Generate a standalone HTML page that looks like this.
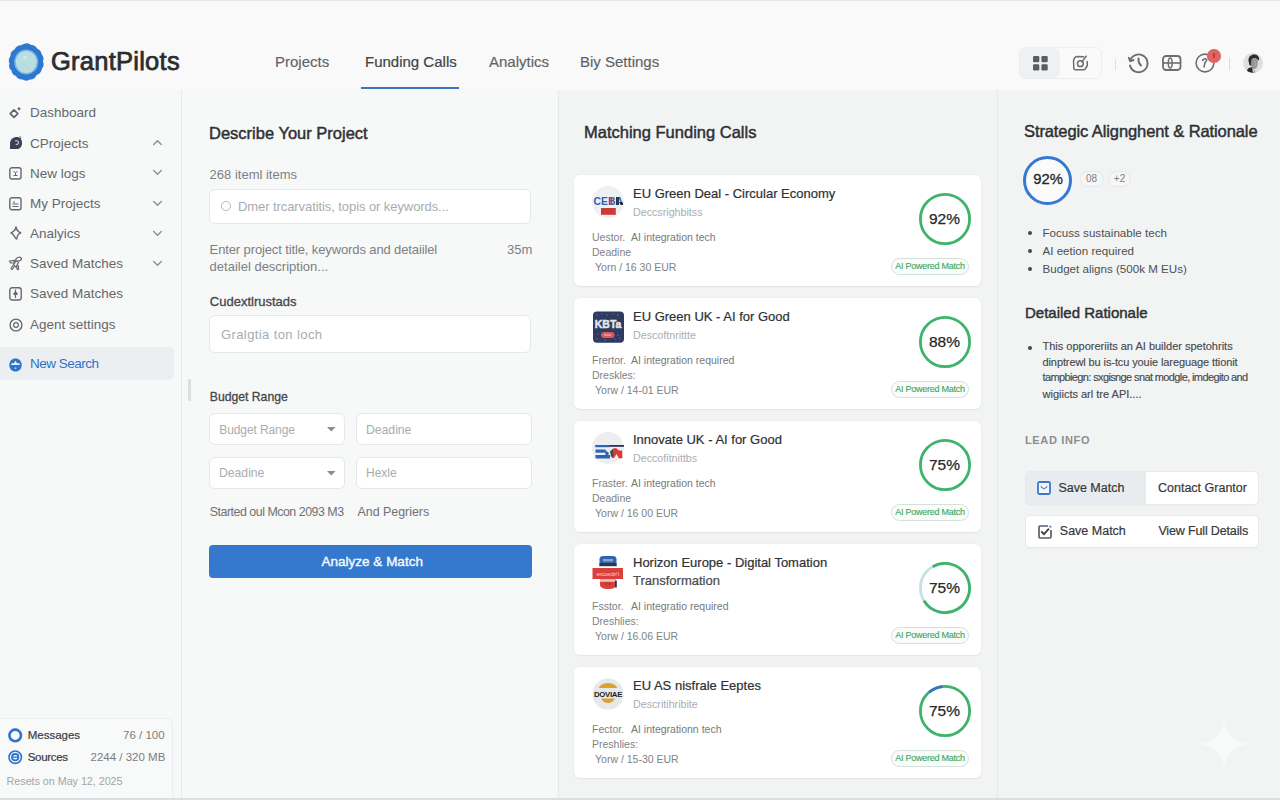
<!DOCTYPE html>
<html><head><meta charset="utf-8">
<style>
*{box-sizing:border-box;margin:0;padding:0}
html,body{width:1280px;height:800px;overflow:hidden}
body{font-family:"Liberation Sans",sans-serif;background:#f7f8f8;position:relative;color:#333}
.a{position:absolute;white-space:nowrap}
svg.a{overflow:visible}
#hdr{position:absolute;left:0;top:0;width:1280px;height:91px;background:#f9f9f9;border-bottom:1px solid #e8eaeb}
#side{position:absolute;left:0;top:90px;width:182px;height:710px;background:#f7f8f8;border-right:1px solid #e6e8e9}
#left{position:absolute;left:182px;top:90px;width:376px;height:710px;background:#f7f8f8}
#mid{position:absolute;left:558px;top:90px;width:440px;height:710px;background:#f2f4f4;border-left:1px solid #e8eaea}
#right{position:absolute;left:997px;top:90px;width:283px;height:710px;background:#f2f4f4;border-left:1px solid #e6e8e8}
#botline{position:absolute;left:0;top:798px;width:1280px;height:2px;background:#dcdfe0;z-index:5}
.nav{font-size:15px;color:#5f6265;top:53px;-webkit-text-stroke:0.15px #5f6265}
.si{font-size:13.5px;color:#65686b;left:30px}
.h2{font-size:16.5px;color:#2e3033;-webkit-text-stroke:0.45px #2e3033}
.lbl{font-size:13px;color:#7d8083}
.inp{position:absolute;background:#fff;border:1px solid #e5e7e9;border-radius:6px}
.ph{font-size:13px;color:#a9acae}
.card{position:absolute;left:574px;width:407px;height:111px;background:#fff;border-radius:6px;box-shadow:0 1px 2px rgba(0,0,0,0.05),0 0 0 1px rgba(0,0,0,0.015)}
.ct{font-size:13px;color:#2e3033;left:59px;top:11px;-webkit-text-stroke:0.2px #2e3033}
.cs{font-size:10.7px;color:#abadaf;left:59px;top:30.7px}
.cm{font-size:10.5px;color:#808285}
.ring{position:absolute;left:344.5px;top:18.3px;width:52px;height:52px}
.pct{position:absolute;left:344.5px;top:35.2px;width:52px;text-align:center;font-size:15.5px;color:#26282a;-webkit-text-stroke:0.25px #26282a}
.badge{position:absolute;left:317px;top:83px;width:78px;height:16.5px;border:1px solid #d3e2d8;border-radius:9px;font-size:9px;color:#3aa85c;-webkit-text-stroke:0.12px #3aa85c;text-align:center;line-height:14.5px;background:#fafcfb;letter-spacing:-0.25px}
.logo{position:absolute;left:18px;top:11px;width:32px;height:32px}
.bl{font-size:11.6px;color:#4c4f52}
.pl{font-size:11px;color:#46494c;-webkit-text-stroke:0.15px #46494c}
.dot{position:absolute;width:4px;height:4px;border-radius:50%;background:#45474a}
</style></head><body>
<div id="hdr"></div>
<div id="side"></div>
<div id="left"></div>
<div id="mid"></div>
<div id="right"></div>
<div id="botline"></div>
<div class="a" style="left:0;top:0;width:1280px;height:1px;background:#e3e6e6"></div>

<!-- Header -->
<svg class="a" style="left:8px;top:42px" width="37" height="40" viewBox="0 0 37 40">
<path d="M16 2C18 0.8 21 1.2 22.5 2.8C25 3 28 4 29 6.5C31.5 7.5 33.5 9.5 33.5 12C35.5 14 36 17 35 19.5C36.2 22 35.8 25 33.8 27C33.5 30 31 32.5 28.5 33C28 35.5 25 37.8 22 37.6C20 39 16.5 39 14.8 37.5C12 37.8 9 36.5 8 34C5.5 33.5 3.5 31 3.5 28.5C1.2 27 0.5 24 1.5 21.5C0.2 19 0.8 16 2.5 14C2.2 11 4 8.5 6.5 7.5C7.5 4.8 10 3.2 13 3.2C14 2.5 15 2.2 16 2Z" fill="#2f78d2"/>
<ellipse cx="18.2" cy="20" rx="12" ry="12.5" fill="#7fb3e3"/>
<ellipse cx="18.2" cy="20" rx="10.5" ry="11" fill="#b8dfe0"/>
<circle cx="17" cy="15.5" r="2" fill="#dfe3e3"/><circle cx="20.5" cy="26" r="1.8" fill="#cfd3d3"/>
</svg>
<div class="a" style="left:51px;top:46.8px;font-size:25.5px;color:#2b2d2f;-webkit-text-stroke:0.75px #2b2d2f;letter-spacing:0.25px">GrantPilots</div>
<div class="a nav" style="left:275px">Projects</div>
<div class="a nav" style="left:365px;color:#424447;-webkit-text-stroke:0.2px #424447">Funding Calls</div>
<div class="a nav" style="left:489px">Analytics</div>
<div class="a nav" style="left:580px">Biy Settings</div>
<div class="a" style="left:361px;top:87.3px;width:98px;height:2.2px;background:#3a76c4"></div>

<div class="a" style="left:1019px;top:47px;width:83px;height:32px;border:1px solid #eceeef;border-radius:7px;background:#fafafa"></div>
<div class="a" style="left:1020px;top:48px;width:40px;height:30px;border-radius:6px;background:#eef0f1"></div>
<svg class="a" style="left:1032.5px;top:56px" width="15" height="15" viewBox="0 0 15 15"><rect x="0" y="0" width="6.3" height="6.3" rx="1.2" fill="#5a5c5f"/><rect x="8.4" y="0" width="6.3" height="6.3" rx="1.2" fill="#5a5c5f"/><rect x="0" y="8.2" width="6.3" height="6.3" rx="1.2" fill="#5a5c5f"/><rect x="8.4" y="8.2" width="6.3" height="6.3" rx="1.2" fill="#5a5c5f"/></svg>
<svg class="a" style="left:1068px;top:50px" width="26" height="26" viewBox="0 0 26 26"><path d="M15.6 6.8L9.1 6.5Q7.5 6.6 6.5 8L5.5 10.7L5.85 18.5Q5.9 19.8 7.2 19.8L15.5 19.8Q16.5 19.8 17.2 19L19.3 15.5L19.2 11.4" fill="none" stroke="#6a6d70" stroke-width="1.5" stroke-linejoin="round" stroke-linecap="round"/><circle cx="12.35" cy="13.65" r="2.9" fill="none" stroke="#6a6d70" stroke-width="1.5"/><path d="M13.9 11.9L18.2 6.2" stroke="#6a6d70" stroke-width="1.5" stroke-linecap="round"/></svg>
<div class="a" style="left:1115px;top:58.5px;width:1px;height:11.5px;background:#dcdee0"></div>
<svg class="a" style="left:1128px;top:53px" width="21" height="20" viewBox="0 0 21 20"><path d="M2.2 7.5A8.9 8.9 0 1 1 2 12.5" fill="none" stroke="#6b6e71" stroke-width="1.9" stroke-linecap="round"/><path d="M0.8 4.8L2.2 8.2L5.6 7" fill="none" stroke="#6b6e71" stroke-width="1.9" stroke-linecap="round" stroke-linejoin="round"/><path d="M10.5 5.5C10.3 8 10.8 10.5 13 12.5" fill="none" stroke="#6b6e71" stroke-width="1.9" stroke-linecap="round"/></svg>
<svg class="a" style="left:1162px;top:55px" width="20" height="16" viewBox="0 0 20 16"><rect x="1" y="1" width="17.5" height="14" rx="3.2" fill="none" stroke="#6b6e71" stroke-width="1.8"/><path d="M1 8H18.5" stroke="#6b6e71" stroke-width="1.6"/><ellipse cx="8.2" cy="8" rx="1.9" ry="5" fill="none" stroke="#6b6e71" stroke-width="1.5"/></svg>
<svg class="a" style="left:1194.5px;top:53px" width="20" height="20" viewBox="0 0 20 20"><circle cx="10" cy="10" r="8.9" fill="none" stroke="#6b6e71" stroke-width="1.6"/><path d="M7.5 7.5C8 5.8 10.5 5.3 11.5 6.5C12.3 7.5 11 8.5 10 9.5L9 14" fill="none" stroke="#6b6e71" stroke-width="1.5" stroke-linecap="round"/></svg>
<div class="a" style="left:1207px;top:49px;width:13.6px;height:13.6px;border-radius:50%;background:#df6464"></div>
<div class="a" style="left:1212.5px;top:53px;width:2.5px;height:5px;border-radius:1px;background:#b83a3a"></div>
<div class="a" style="left:1229px;top:58px;width:1px;height:12px;background:#dadcde"></div>
<svg class="a" style="left:1243px;top:53px" width="20" height="20" viewBox="0 0 20 20"><defs><clipPath id="av"><circle cx="10" cy="10" r="10"/></clipPath></defs><g clip-path="url(#av)"><rect width="20" height="20" fill="#dedede"/><path d="M5.5 8C5 3 9 1 12 1.5C15.5 2 16.5 5 16 7.5L15 7C14 5.5 12 5 10 5.5L8.5 9L8.5 13L6.5 12Z" fill="#2b2b2d"/><path d="M8.5 6C11 5 13.5 5.5 14.8 7.5L14.5 12C14 15 12.5 16 11 16L9 14.5L8.3 10Z" fill="#9a9494"/><path d="M11.5 8L12.5 10.5L12 13.5" stroke="#e79a8a" stroke-width="1" fill="none"/><path d="M3 20L5 15.5L9 14L10.5 16.5L12.5 20Z" fill="#2a2a2e"/><path d="M9 14.5L11 17L12 20H10Z" fill="#cfcfcf"/></g></svg>


<!-- Sidebar -->
<svg class="a" style="left:8px;top:106px" width="15" height="14" viewBox="0 0 15 14"><path d="M6 3.8L9.8 7.6L6 11.4L2.2 7.6Z" fill="none" stroke="#636669" stroke-width="1.7" stroke-linejoin="round"/><path d="M11 1L12.8 2.8L11 4.6L9.2 2.8Z" fill="#636669"/></svg>
<svg class="a" style="left:8.5px;top:135.5px" width="14" height="14" viewBox="0 0 14 14"><path d="M1 13L1 8C1 3.5 4 1 8 1C11 1 13 3.5 13 7C13 10.5 11 13 8 13Z" fill="#3b4056"/><path d="M6 5C7.5 4 9.5 4.8 9.5 6.5C9.5 8 8 9 6.8 8.2" fill="none" stroke="#b9bcc5" stroke-width="1.3"/><path d="M10.5 0.5L12 1.5L11 3" fill="none" stroke="#555a6c" stroke-width="1"/></svg>
<svg class="a" style="left:9px;top:166.5px" width="13" height="13" viewBox="0 0 13 13"><rect x="0.8" y="0.8" width="11.2" height="11.2" rx="2" fill="none" stroke="#66696c" stroke-width="1.4"/><path d="M4.5 4L6.5 6L8.5 4M4.5 8.5H8.5M6.5 6V8.5" fill="none" stroke="#66696c" stroke-width="1"/></svg>
<svg class="a" style="left:9px;top:196.6px" width="13" height="14" viewBox="0 0 13 14"><rect x="0.8" y="0.8" width="11.2" height="12" rx="2" fill="none" stroke="#66696c" stroke-width="1.4"/><path d="M5 4V6.5M3.5 7H9.5M3.5 9.5H9.5" fill="none" stroke="#66696c" stroke-width="1"/></svg>
<svg class="a" style="left:9.5px;top:226.3px" width="12" height="14" viewBox="0 0 12 14"><path d="M6 0.8C6.5 4 7.5 5.5 10.8 6.8C8 7.8 7 9 6.8 13C5 13 5 9 1 6.8C4 5.5 5.5 4 6 0.8Z" fill="none" stroke="#66696c" stroke-width="1.4" stroke-linejoin="round"/></svg>
<svg class="a" style="left:8px;top:255.5px" width="15" height="15" viewBox="0 0 15 15"><ellipse cx="10.6" cy="3.2" rx="2.9" ry="1.8" transform="rotate(-20 10.6 3.2)" fill="none" stroke="#66696c" stroke-width="1.3"/><path d="M8 4.5L5.5 9L8.2 11.2L10.5 6" fill="none" stroke="#66696c" stroke-width="1.3" stroke-linejoin="round"/><path d="M1.5 5L6.8 4.3L5.8 7L2.5 7Z" fill="none" stroke="#66696c" stroke-width="1.2" stroke-linejoin="round"/><path d="M4.8 9.5L3 12.8L4.3 13.5L6.3 10.5" fill="none" stroke="#66696c" stroke-width="1.2" stroke-linejoin="round"/><path d="M8.5 10L9.3 13.6L10.6 13.4L10.2 9" fill="none" stroke="#66696c" stroke-width="1.2" stroke-linejoin="round"/></svg>
<svg class="a" style="left:9px;top:286.6px" width="13" height="14" viewBox="0 0 13 14"><rect x="0.8" y="0.8" width="11.4" height="12.2" rx="2.3" fill="none" stroke="#66696c" stroke-width="1.4"/><path d="M6.5 2.5V11M4 7H9" stroke="#66696c" stroke-width="1.2"/><circle cx="6.5" cy="6.5" r="1.8" fill="#66696c"/></svg>
<svg class="a" style="left:8.5px;top:317.5px" width="14" height="14" viewBox="0 0 14 14"><circle cx="7" cy="7" r="5.9" fill="none" stroke="#66696c" stroke-width="1.4"/><circle cx="7" cy="7" r="2.4" fill="none" stroke="#66696c" stroke-width="1.2"/></svg>
<svg class="a" style="left:153px;top:140px" width="9" height="5" viewBox="0 0 9 5"><path d="M0.7 4.4L4.5 0.8L8.3 4.4" fill="none" stroke="#8c8f92" stroke-width="1.4" stroke-linecap="round" stroke-linejoin="round"/></svg>
<svg class="a" style="left:153px;top:170.3px" width="9" height="5" viewBox="0 0 9 5"><path d="M0.7 0.6L4.5 4.2L8.3 0.6" fill="none" stroke="#8c8f92" stroke-width="1.4" stroke-linecap="round" stroke-linejoin="round"/></svg>
<svg class="a" style="left:153px;top:200.5px" width="9" height="5" viewBox="0 0 9 5"><path d="M0.7 0.6L4.5 4.2L8.3 0.6" fill="none" stroke="#8c8f92" stroke-width="1.4" stroke-linecap="round" stroke-linejoin="round"/></svg>
<svg class="a" style="left:153px;top:230.8px" width="9" height="5" viewBox="0 0 9 5"><path d="M0.7 0.6L4.5 4.2L8.3 0.6" fill="none" stroke="#8c8f92" stroke-width="1.4" stroke-linecap="round" stroke-linejoin="round"/></svg>
<svg class="a" style="left:153px;top:261px" width="9" height="5" viewBox="0 0 9 5"><path d="M0.7 0.6L4.5 4.2L8.3 0.6" fill="none" stroke="#8c8f92" stroke-width="1.4" stroke-linecap="round" stroke-linejoin="round"/></svg>
<div class="a si" style="top:105px">Dashboard</div>
<div class="a si" style="top:135.7px">CProjects</div>
<div class="a si" style="top:165.7px">New logs</div>
<div class="a si" style="top:195.7px">My Projects</div>
<div class="a si" style="top:226.4px">Analyics</div>
<div class="a si" style="top:255.7px">Saved Matches</div>
<div class="a si" style="top:286.2px">Saved Matches</div>
<div class="a si" style="top:317.2px">Agent settings</div>
<div class="a" style="left:0;top:347px;width:174px;height:33px;background:#eceff1;border-radius:0 5px 5px 0"></div>
<svg class="a" style="left:8.5px;top:357.5px" width="13" height="14" viewBox="0 0 13 14"><path d="M6.5 0.5C10 0.5 12.7 3.2 12.7 7C12.7 10.8 10 13.5 6.5 13.5C3 13.5 0.3 10.8 0.3 7C0.3 3.2 3 0.5 6.5 0.5Z" fill="#2f74cc"/><path d="M6.5 2.8L8 5.2H10.5L10.8 7H2.2L2.5 5.2H5Z" fill="#eef2f6"/><circle cx="6.5" cy="10.2" r="0.9" fill="#b9cfee"/></svg>
<div class="a si" style="top:356.4px;color:#2f72c8;letter-spacing:-0.5px">New Search</div>
<div class="a" style="left:188px;top:379px;width:3px;height:22px;background:#dcdedf;border-radius:1px"></div>

<div class="a" style="left:0;top:718px;width:173px;height:84px;border:1px solid #eceeef;border-left:none;border-radius:0 6px 0 0;background:#f8f9f9"></div>
<svg class="a" style="left:7.5px;top:728px" width="15" height="15" viewBox="0 0 15 15"><circle cx="7.2" cy="7.4" r="5.8" fill="none" stroke="#2f74cc" stroke-width="2.6"/><path d="M4.5 1.8H10" stroke="#2f74cc" stroke-width="2"/></svg>
<svg class="a" style="left:7.5px;top:749.5px" width="15" height="15" viewBox="0 0 15 15"><circle cx="7.2" cy="7.2" r="6.2" fill="none" stroke="#2f74cc" stroke-width="1.6"/><circle cx="7.2" cy="7.2" r="3.2" fill="none" stroke="#2f74cc" stroke-width="1.8"/><path d="M4.5 7.2H10" stroke="#2f74cc" stroke-width="1.3"/></svg>
<div class="a" style="left:27.7px;top:729px;font-size:11.5px;color:#3a3c3f;-webkit-text-stroke:0.2px #3a3c3f">Messages</div>
<div class="a" style="left:123px;top:729px;font-size:11.5px;color:#7a7d80">76 / 100</div>
<div class="a" style="left:27.7px;top:750.5px;font-size:11.5px;color:#3a3c3f;letter-spacing:-0.3px;-webkit-text-stroke:0.2px #3a3c3f">Sources</div>
<div class="a" style="left:90.5px;top:750.5px;font-size:11.5px;color:#7a7d80">2244 / 320 MB</div>
<div class="a" style="left:6.6px;top:775px;font-size:10.8px;color:#a3a6a8;letter-spacing:-0.05px">Resets on May 12, 2025</div>

<!-- Left panel -->
<div class="a h2" style="left:209px;top:123.7px">Describe Your Project</div>
<div class="a lbl" style="left:209.6px;top:167.2px">268 iteml items</div>
<div class="inp" style="left:209px;top:189px;width:322px;height:35px"></div>
<div class="a" style="left:221px;top:201px;width:9.5px;height:9.5px;border:1.5px solid #b3b5b7;border-radius:50%"></div>
<div class="a ph" style="left:238px;top:199.1px;letter-spacing:-0.08px">Dmer trcarvatitis, topis or keywords...</div>
<div class="a lbl" style="left:209.6px;top:242px;letter-spacing:-0.12px">Enter project title, keywords and detaiilel</div>
<div class="a lbl" style="left:209.6px;top:258.9px">detailel description...</div>
<div class="a lbl" style="left:507px;top:242px">35m</div>
<div class="a lbl" style="left:209.8px;top:293.8px;color:#45474a;-webkit-text-stroke:0.3px #45474a">Cudextlrustads</div>
<div class="inp" style="left:209px;top:315px;width:322px;height:38px"></div>
<div class="a ph" style="left:221px;top:327.3px;letter-spacing:0.4px">Gralgtia ton loch</div>
<div class="a lbl" style="left:209.8px;top:389.8px;color:#45474a;font-size:12.2px;-webkit-text-stroke:0.3px #45474a">Budget Range</div>
<div class="inp" style="left:209px;top:413px;width:136px;height:32px"></div>
<div class="a ph" style="left:219.3px;top:423px;font-size:12px;letter-spacing:-0.1px">Budget Range</div>
<svg class="a" style="left:326.5px;top:427px" width="8.5" height="4.5"><path d="M0 0H8.5L4.25 4.5Z" fill="#8a8c8f"/></svg>
<div class="inp" style="left:355.5px;top:413px;width:176px;height:32px"></div>
<div class="a ph" style="left:366px;top:423px;font-size:12.2px">Deadine</div>
<div class="inp" style="left:209px;top:457px;width:136px;height:32px"></div>
<div class="a ph" style="left:219px;top:466px;font-size:12.2px">Deadine</div>
<svg class="a" style="left:326.5px;top:471px" width="8.5" height="4.5"><path d="M0 0H8.5L4.25 4.5Z" fill="#8a8c8f"/></svg>
<div class="inp" style="left:355.5px;top:457px;width:176px;height:32px"></div>
<div class="a ph" style="left:366px;top:466px;font-size:12px">Hexle</div>
<div class="a lbl" style="left:209.8px;top:505.2px;color:#6f7275;font-size:12.4px;letter-spacing:-0.48px">Started oul Mcon 2093 M3</div>
<div class="a lbl" style="left:357.5px;top:505.2px;color:#6f7275;font-size:12.4px">And Pegriers</div>
<div class="a" style="left:208.5px;top:545px;width:323.5px;height:33px;background:#3579cf;border-radius:4px;color:#f4f8fd;font-size:13.5px;text-align:center;line-height:33px;padding-left:4px;-webkit-text-stroke:0.4px #f4f8fd">Analyze &amp; Match</div>

<!-- Middle -->
<div class="a h2" style="left:584px;top:122.7px">Matching Funding Calls</div>
<div class="card" style="top:175px">
  <div class="logo" id="c1L"><svg width="32" height="32" viewBox="0 0 32 32"><circle cx="16" cy="16" r="16" fill="#eff0f1"/><text x="1.5" y="19" textLength="29.5" lengthAdjust="spacingAndGlyphs" font-family="Liberation Sans" font-weight="bold" font-size="11.5" fill="#2f63b5">CEBA</text><rect x="18.5" y="11" width="1.8" height="8" fill="#d23a36"/><rect x="24" y="11" width="3" height="8" fill="#2d3650"/><circle cx="29.5" cy="17.5" r="1.5" fill="#1d1f25"/><rect x="9" y="22" width="14.8" height="6.8" fill="#cb3a35"/></svg></div>
  <div class="a ct">EU Green Deal - Circular Economy</div>
  <div class="a cs">Deccsrighbitss</div>
  <div class="a cm" style="left:18px;top:55.5px">Uestor.</div>
  <div class="a cm" style="left:57px;top:55.5px;color:#76787b">AI integration tech</div>
  <div class="a cm" style="left:18px;top:71px">Deadine</div>
  <div class="a cm" style="left:21px;top:86.4px">Yorn / 16 30 EUR</div>
  <svg class="ring" viewBox="0 0 52 52" id="c1R"><circle cx="26" cy="26" r="24.6" fill="none" stroke="#3db36b" stroke-width="2.8"/></svg>
  <div class="pct">92%</div>
  <div class="badge">AI Powered Match</div>
</div>
<div class="card" style="top:298px">
  <div class="logo" id="c2L"><svg width="32" height="35" viewBox="0 0 32 35" style="overflow:visible"><rect x="1" y="2.5" width="31" height="31.3" rx="4" fill="#2e3a5e"/><path d="M4 6h2M9 5h1.5M14 6h2M20 5h1.5M25 6h2M5 25h1.5M25 26h2M4 30h2M12 31h2M22 30h1.5M27 29h1.5" stroke="#3b6fc4" stroke-width="1"/><text x="2.8" y="19" textLength="26.5" lengthAdjust="spacingAndGlyphs" font-family="Liberation Sans" font-weight="bold" font-size="11.5" fill="#e4e6ea" stroke="#e4e6ea" stroke-width="0.5">KBTa</text><rect x="9" y="23" width="13.5" height="6" rx="3" fill="#e0575a"/><path d="M12 26h7" stroke="#f3c9c9" stroke-width="1"/></svg></div>
  <div class="a ct">EU Green UK - AI for Good</div>
  <div class="a cs">Descoftnrittte</div>
  <div class="a cm" style="left:18px;top:55.5px">Frertor.</div>
  <div class="a cm" style="left:57px;top:55.5px;color:#76787b">AI integration required</div>
  <div class="a cm" style="left:18px;top:71px">Dreskles:</div>
  <div class="a cm" style="left:21px;top:86.4px">Yorw / 14-01 EUR</div>
  <svg class="ring" viewBox="0 0 52 52" id="c2R"><circle cx="26" cy="26" r="24.6" fill="none" stroke="#3db36b" stroke-width="2.8"/></svg>
  <div class="pct">88%</div>
  <div class="badge">AI Powered Match</div>
</div>
<div class="card" style="top:421px">
  <div class="logo" id="c3L"><svg width="32" height="32" viewBox="0 0 32 32"><circle cx="16" cy="16" r="16" fill="#eceef0"/><rect x="3.5" y="13" width="28.5" height="1.8" fill="#2d3650"/><rect x="3.5" y="13" width="14" height="2.2" fill="#2f63b5"/><rect x="3.5" y="17.5" width="10" height="3.2" fill="#2f63b5"/><path d="M3.5 23H18V26.5H3.5Z" fill="#2f63b5"/><path d="M13 18L17 21L16 23.5L13.5 23Z" fill="#2f63b5"/><path d="M20 17L24 16L27 18.5L30 18.5L30.5 26L27 26.5L24.5 22L22 26H20Z" fill="#d93a36"/><path d="M18 19L21 17.5L21.5 24L19 25Z" fill="#48484e"/></svg></div>
  <div class="a ct">Innovate UK - AI for Good</div>
  <div class="a cs">Deccofitnittbs</div>
  <div class="a cm" style="left:18px;top:55.5px">Fraster.</div>
  <div class="a cm" style="left:57px;top:55.5px;color:#76787b">AI integration tech</div>
  <div class="a cm" style="left:18px;top:71px">Deadine</div>
  <div class="a cm" style="left:21px;top:86.4px">Yorw / 16 00 EUR</div>
  <svg class="ring" viewBox="0 0 52 52" id="c3R"><circle cx="26" cy="26" r="24.6" fill="none" stroke="#3db36b" stroke-width="2.8"/></svg>
  <div class="pct">75%</div>
  <div class="badge">AI Powered Match</div>
</div>
<div class="card" style="top:544px">
  <div class="logo" id="c4L"><svg width="32" height="34" viewBox="0 0 32 34" style="overflow:visible"><path d="M7.5 4C7.5 2 9 1 11.5 1H21C23.5 1 24.5 2.5 24.5 4.5V11H7.5Z" fill="#2f64b0"/><rect x="7.5" y="8" width="17" height="3.2" fill="#2d3650"/><rect x="11" y="4" width="10" height="2.5" fill="#8ea3c8"/><rect x="0.5" y="13" width="30.5" height="11" fill="#d9403a"/><text x="15.8" y="20.8" text-anchor="middle" font-family="Liberation Sans" font-size="6" fill="#f2cfcc" letter-spacing="-0.2">ercoedrr'i</text><rect x="8" y="24" width="16" height="1.8" fill="#e9b1ad"/><path d="M8 26.5H24V30C24 32.5 21 34 16.5 34C11.5 34 8 32.5 8 30Z" fill="#d9403a"/><rect x="23" y="25.5" width="1.8" height="7" fill="#2d3650"/><circle cx="14" cy="29" r="0.7" fill="#3a2a2a"/><circle cx="17.5" cy="29" r="0.7" fill="#3a2a2a"/></svg></div>
  <div class="a ct">Horizon Europe - Digital Tomation</div>
  <div class="a ct" style="top:28.5px;color:#4f5255">Transformation</div>
  <div class="a cm" style="left:18px;top:55.5px">Fsstor.</div>
  <div class="a cm" style="left:57px;top:55.5px;color:#76787b">AI integratio required</div>
  <div class="a cm" style="left:18px;top:71px">Dreshlies:</div>
  <div class="a cm" style="left:21px;top:86.4px">Yorw / 16.06 EUR</div>
  <svg class="ring" viewBox="0 0 52 52" id="c4R"><circle cx="26" cy="26" r="24.6" fill="none" stroke="#c5e1e2" stroke-width="2.8"/><circle cx="26" cy="26" r="24.6" fill="none" stroke="#3db36b" stroke-width="2.8" stroke-dasharray="114.6 200" transform="rotate(-120 26 26)"/></svg>
  <div class="pct">75%</div>
  <div class="badge">AI Powered Match</div>
</div>
<div class="card" style="top:667px">
  <div class="logo" id="c5L"><svg width="32" height="32" viewBox="0 0 32 32"><circle cx="16" cy="16" r="15.5" fill="#e6e8e9"/><path d="M6.5 10C8.5 6.5 12 5 16 5C20 5 23.5 6.5 25.5 10Z" fill="#d9a233"/><path d="M9 20.5H23C21.5 23.5 19 25 16 25C13 25 10.5 23.5 9 20.5Z" fill="#d9a233"/><text x="16" y="19.2" text-anchor="middle" font-family="Liberation Sans" font-weight="bold" font-size="7.8" fill="#1e1f24" letter-spacing="-0.3">DOVIAE</text></svg></div>
  <div class="a ct">EU AS nisfrale Eeptes</div>
  <div class="a cs">Descritihribite</div>
  <div class="a cm" style="left:18px;top:55.5px">Fector.</div>
  <div class="a cm" style="left:57px;top:55.5px;color:#76787b">AI integrationn tech</div>
  <div class="a cm" style="left:18px;top:71px">Preshlies:</div>
  <div class="a cm" style="left:21px;top:86.4px">Yorw / 15-30 EUR</div>
  <svg class="ring" viewBox="0 0 52 52" id="c5R"><circle cx="26" cy="26" r="24.6" fill="none" stroke="#3db36b" stroke-width="2.8"/><circle cx="26" cy="26" r="24.6" fill="none" stroke="#3b6fc9" stroke-width="2.8" stroke-dasharray="14.6 200" transform="rotate(-130 26 26)"/></svg>
  <div class="pct">75%</div>
  <div class="badge">AI Powered Match</div>
</div>

<!-- Right -->
<div class="a" style="left:1024px;top:121.8px;font-size:16.5px;color:#2e3033;-webkit-text-stroke:0.45px #2e3033;letter-spacing:-0.1px">Strategic Alignghent &amp; Rationale</div>
<svg class="a" style="left:1023px;top:155.5px" width="49" height="49" viewBox="0 0 49 49"><circle cx="24.5" cy="24.5" r="23" fill="#fbfbfb" stroke="#3479d2" stroke-width="3"/></svg>
<div class="a" style="left:1023px;top:171.4px;width:50px;text-align:center;font-size:14.8px;color:#26282b;-webkit-text-stroke:0.3px #26282b">92%</div>
<div class="a" style="left:1079.5px;top:171px;width:24px;height:15.5px;border:1px solid #e5e7e8;border-radius:8px;font-size:10px;color:#7d8083;text-align:center;line-height:13.5px;background:#f5f6f6">08</div>
<div class="a" style="left:1108px;top:171px;width:23px;height:15.5px;border:1px solid #e5e7e8;border-radius:8px;font-size:10px;color:#7d8083;text-align:center;line-height:13.5px;background:#f5f6f6">+2</div>
<div class="dot" style="left:1027.6px;top:230.95px"></div>
<div class="a bl" style="left:1042.5px;top:225.7px">Focuss sustainable tech</div>
<div class="dot" style="left:1027.6px;top:249.25px"></div>
<div class="a bl" style="left:1042.5px;top:244px">AI eetion required</div>
<div class="dot" style="left:1027.6px;top:267.45px"></div>
<div class="a bl" style="left:1042.5px;top:262.3px">Budget aligns (500k M EUs)</div>
<div class="a" style="left:1025px;top:304.2px;font-size:15px;color:#2e3033;-webkit-text-stroke:0.45px #2e3033">Detailed Rationale</div>
<div class="dot" style="left:1027.6px;top:345.95px"></div>
<div class="a pl" style="left:1042.5px;top:340.2px">This opporeriits an AI builder spetohrits</div>
<div class="a pl" style="left:1042.5px;top:356px;letter-spacing:-0.1px">dinptrewl bu is-tcu youie lareguage ttionit</div>
<div class="a pl" style="left:1042.5px;top:371.3px;letter-spacing:-0.62px">tampbiegn: sxgisnge snat modgle, imdegito and</div>
<div class="a pl" style="left:1042.5px;top:387.5px">wigiicts arl tre API....</div>
<div class="a" style="left:1025px;top:433.7px;font-size:11px;font-weight:bold;color:#8a8d90;letter-spacing:0.65px">LEAD INFO</div>
<div class="a" style="left:1024.5px;top:471px;width:234.5px;height:33.5px;border:1px solid #e7e9ea;border-radius:5px;background:#fff;overflow:hidden;box-shadow:0 1px 1px rgba(0,0,0,0.02)"><div class="a" style="left:0;top:0;width:120px;height:33px;background:#e9ecee"></div></div>
<svg class="a" style="left:1036.5px;top:480.5px" width="14" height="14" viewBox="0 0 14 14"><rect x="1" y="1" width="12" height="12" rx="1.5" fill="#f3f6fa" stroke="#3a78cc" stroke-width="1.8"/><path d="M3.5 4.5L7 7.5L10.5 4.5L10 6.5L7 8.5L4 6.5Z" fill="#3a78cc"/></svg>
<div class="a" style="left:1058.4px;top:481px;font-size:12.5px;color:#36383b;-webkit-text-stroke:0.2px #36383b">Save Match</div>
<div class="a" style="left:1158px;top:481px;font-size:12.5px;color:#36383b;-webkit-text-stroke:0.2px #36383b">Contact Grantor</div>
<div class="a" style="left:1024.5px;top:514.5px;width:234.5px;height:33.5px;border:1px solid #e7e9ea;border-radius:5px;background:#fff;box-shadow:0 1px 1px rgba(0,0,0,0.02)"></div>
<svg class="a" style="left:1037.5px;top:524.5px" width="14" height="14" viewBox="0 0 14 14"><path d="M10 1H2.2C1.5 1 1 1.5 1 2.2V11.8C1 12.5 1.5 13 2.2 13H11.8C12.5 13 13 12.5 13 11.8V5" fill="none" stroke="#5b5e62" stroke-width="1.7"/><path d="M3.8 7L6 9.2L10.5 4.2" fill="none" stroke="#3b3e42" stroke-width="1.8" stroke-linecap="round"/><path d="M11.5 0.8L13.2 2.5" stroke="#3a78cc" stroke-width="1.3"/></svg>
<div class="a" style="left:1059.8px;top:524.4px;font-size:12.5px;color:#36383b;-webkit-text-stroke:0.2px #36383b">Save Match</div>
<div class="a" style="left:1158.4px;top:524.4px;font-size:12.5px;color:#36383b;letter-spacing:-0.15px;-webkit-text-stroke:0.2px #36383b">View Full Details</div>
<svg class="a" style="left:1200px;top:720px" width="48" height="48" viewBox="0 0 48 48"><path d="M24 0C26 14 34 22 48 24C34 26 26 34 24 48C22 34 14 26 0 24C14 22 22 14 24 0Z" fill="#f8f9f9"/></svg>
</body></html>
